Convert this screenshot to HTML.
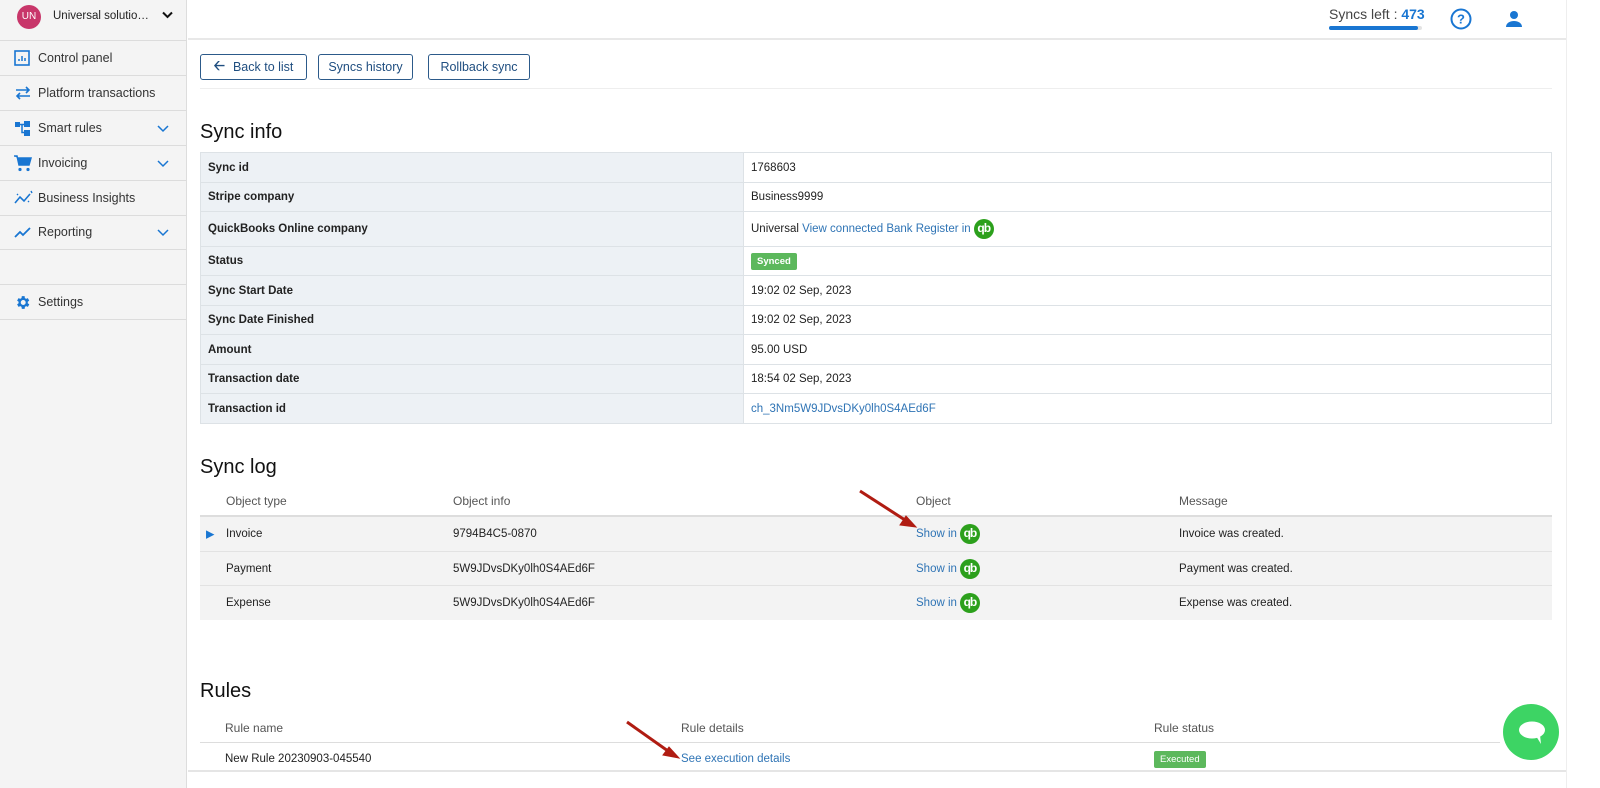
<!DOCTYPE html>
<html><head><meta charset="utf-8"><style>
*{box-sizing:border-box;margin:0;padding:0}
body{width:1600px;height:788px;overflow:hidden;background:#fff;font-family:"Liberation Sans",sans-serif;font-size:12px;color:#222;position:relative}
.abs{position:absolute}
#side{left:0;top:0;width:187px;height:788px;background:#f4f4f4;border-right:1px solid #ddd}
.it{position:absolute;left:0;width:186px;height:35px;border-bottom:1px solid #dcdcdc;font-size:12.5px;color:#333;display:flex;align-items:center;padding-left:38px}
.it svg.ic{position:absolute;left:14px;top:9px}
.chev{position:absolute;left:157px;top:14px}
#hdr{left:188px;top:0;width:1378px;height:40px;border-bottom:2px solid #e8e8e8}
.btn{position:absolute;top:54px;height:26px;border:1px solid #2c5a8a;border-radius:3px;color:#1f4e80;font-size:12.5px;display:flex;align-items:center;justify-content:center}
h2{position:absolute;font-weight:normal;font-size:20px;color:#111}
table{border-collapse:collapse}
#info{position:absolute;left:200px;top:152px;width:1352px}
#info td{border:1px solid #dde2e6;padding:0 7px;font-size:11.5px;vertical-align:middle}
#info td.l{background:#edf1f5;font-weight:bold;width:543px;color:#222}
a{color:#2f74b5;text-decoration:none}
.qb{display:inline-block;width:20px;height:20px;border-radius:50%;background:#2ca01c;color:#fff;font-weight:bold;font-size:12px;text-align:center;line-height:19px;vertical-align:middle;letter-spacing:-1px;margin-left:3px}
.row{position:absolute;left:200px;width:1352px;background:#f3f3f3;border-top:1px solid #e2e2e2;font-size:11.5px}
.row span.c{position:absolute;top:50%;transform:translateY(-50%);white-space:nowrap}
.th{position:absolute;font-size:12px;color:#555}
.badge{display:inline-block;background:#5cb85c;color:#fff;font-weight:bold;font-size:9.5px;padding:3px 6px;border-radius:2px}
</style></head><body>
<div id="side" class="abs">
 <div class="abs" style="left:0;top:0;width:186px;height:41px;border-bottom:1px solid #dcdcdc">
  <div class="abs" style="left:17px;top:5px;width:24px;height:24px;border-radius:50%;background:#c8366a;color:#fff;font-size:10px;text-align:center;line-height:24px">UN</div>
  <div class="abs" style="left:53px;top:10px;font-size:11.5px;color:#222">Universal solutio…</div>
  <svg class="abs" style="left:162px;top:11px" width="11" height="8" viewBox="0 0 11 8"><path d="M1 1.5l4.5 4.5 4.5-4.5" stroke="#111" stroke-width="2" fill="none"/></svg>
 </div>
 <div class="it" style="top:41px"><svg class="ic" width="16" height="16" viewBox="0 0 16 16"><rect x="1" y="1" width="14" height="14" fill="none" stroke="#1976d2" stroke-width="1.6"/><path d="M5 11v-2M8 11v-5M11 11v-3" stroke="#1976d2" stroke-width="1.5"/></svg>Control panel</div>
 <div class="it" style="top:76px"><svg class="ic" width="18" height="16" viewBox="0 0 18 16"><path d="M2 5h13M12 2l3 3-3 3M16 11H3M6 8l-3 3 3 3" stroke="#1976d2" stroke-width="1.6" fill="none"/></svg>Platform transactions</div>
 <div class="it" style="top:111px"><svg class="ic" width="17" height="16" viewBox="0 0 17 16"><rect x="1" y="2" width="5" height="5" fill="#1976d2"/><rect x="10" y="1" width="6" height="6" fill="#1976d2"/><rect x="10" y="10" width="6" height="6" fill="#1976d2"/><path d="M6 4.5h4M8 4.5v8h2" stroke="#1976d2" stroke-width="1.5" fill="none"/></svg>Smart rules<svg class="chev" width="12" height="8"><path d="M1 1l5 5 5-5" stroke="#1976d2" stroke-width="1.5" fill="none"/></svg></div>
 <div class="it" style="top:146px"><svg class="ic" width="18" height="17" viewBox="0 0 18 17"><path d="M0 1h3l2 9h10l2-7H4" fill="#1976d2" stroke="#1976d2" stroke-width="1.5"/><circle cx="6" cy="14.5" r="1.6" fill="#1976d2"/><circle cx="14" cy="14.5" r="1.6" fill="#1976d2"/></svg>Invoicing<svg class="chev" width="12" height="8"><path d="M1 1l5 5 5-5" stroke="#1976d2" stroke-width="1.5" fill="none"/></svg></div>
 <div class="it" style="top:181px"><svg class="ic" width="19" height="16" viewBox="0 0 19 16"><path d="M1 13l5-6 4 4 6-7" stroke="#1976d2" stroke-width="1.6" fill="none"/><path d="M3 4l1 1M14 11l1 1M17 1l1 2" stroke="#1976d2" stroke-width="1.4"/></svg>Business Insights</div>
 <div class="it" style="top:215px"><svg class="ic" width="18" height="16" viewBox="0 0 18 16"><path d="M1 13l5-5 3 3 7-7" stroke="#1976d2" stroke-width="1.8" fill="none"/></svg>Reporting<svg class="chev" width="12" height="8"><path d="M1 1l5 5 5-5" stroke="#1976d2" stroke-width="1.5" fill="none"/></svg></div>
 <div class="it" style="top:250px"></div>
 <div class="it" style="top:285px"><svg class="ic" width="17" height="17" viewBox="0 0 24 24"><path fill="#1976d2" d="M19.4 13a7.5 7.5 0 000-2l2.1-1.6-2-3.5-2.5 1a7 7 0 00-1.7-1L15 3h-4l-.4 2.9a7 7 0 00-1.7 1l-2.5-1-2 3.5L6.5 11a7.5 7.5 0 000 2l-2.1 1.6 2 3.5 2.5-1a7 7 0 001.7 1L11 21h4l.4-2.9a7 7 0 001.7-1l2.5 1 2-3.5zM13 15.5a3.5 3.5 0 110-7 3.5 3.5 0 010 7z"/></svg>Settings</div>
</div>
<div id="hdr" class="abs">
 <div class="abs" style="left:1141px;top:6px;font-size:14px;color:#444">Syncs left : <b style="color:#1976d2">473</b></div>
 <div class="abs" style="left:1141px;top:26px;width:93px;height:4px;background:#e3e3e3;border-radius:2px"><div style="width:89px;height:4px;background:#1976d2;border-radius:2px"></div></div>
 <svg class="abs" style="left:1262px;top:8px" width="22" height="22" viewBox="0 0 22 22"><circle cx="11" cy="11" r="9.5" stroke="#1976d2" stroke-width="2" fill="none"/><text x="11" y="15.5" font-size="13" font-weight="bold" fill="#1976d2" text-anchor="middle" font-family="Liberation Sans">?</text></svg>
 <svg class="abs" style="left:1316px;top:9px" width="20" height="20" viewBox="0 0 20 20"><circle cx="10" cy="6" r="4" fill="#1976d2"/><path d="M2 18c0-4 4-6 8-6s8 2 8 6z" fill="#1976d2"/></svg>
</div>
<div class="abs" style="left:1566px;top:0;width:34px;height:788px;background:#fff;border-left:1px solid #eee"></div>
<div class="btn" style="left:200px;width:107px"><span style="font-size:14px;margin-right:8px;font-weight:bold">&#129120;</span>Back to list</div>
<div class="btn" style="left:318px;width:95px">Syncs history</div>
<div class="btn" style="left:428px;width:102px">Rollback sync</div>
<div class="abs" style="left:200px;top:88px;width:1352px;height:1px;background:#eee"></div>
<h2 style="left:200px;top:121px">Sync info</h2>
<table id="info">
<tr style="height:30px"><td class="l">Sync id</td><td>1768603</td></tr>
<tr style="height:29px"><td class="l">Stripe company</td><td>Business9999</td></tr>
<tr style="height:35px"><td class="l">QuickBooks Online company</td><td>Universal <a>View connected Bank Register in</a><span class="qb">qb</span></td></tr>
<tr style="height:29px"><td class="l">Status</td><td><span class="badge">Synced</span></td></tr>
<tr style="height:30px"><td class="l">Sync Start Date</td><td>19:02 02 Sep, 2023</td></tr>
<tr style="height:29px"><td class="l">Sync Date Finished</td><td>19:02 02 Sep, 2023</td></tr>
<tr style="height:30px"><td class="l">Amount</td><td>95.00 USD</td></tr>
<tr style="height:29px"><td class="l">Transaction date</td><td>18:54 02 Sep, 2023</td></tr>
<tr style="height:30px"><td class="l">Transaction id</td><td><a>ch_3Nm5W9JDvsDKy0lh0S4AEd6F</a></td></tr>
</table>
<h2 style="left:200px;top:456px">Sync log</h2>
<div class="th" style="left:226px;top:494px">Object type</div><div class="th" style="left:453px;top:494px">Object info</div><div class="th" style="left:916px;top:494px">Object</div><div class="th" style="left:1179px;top:494px">Message</div>
<div class="row" style="top:515px;height:36px;border-top:2px solid #ddd"><span class="c" style="left:6px;color:#1976d2;font-size:11px">&#9654;</span><span class="c" style="left:26px">Invoice</span><span class="c" style="left:253px">9794B4C5-0870</span><span class="c" style="left:716px"><a>Show in</a><span class="qb">qb</span></span><span class="c" style="left:979px">Invoice was created.</span></div>
<div class="row" style="top:551px;height:34px"><span class="c" style="left:26px">Payment</span><span class="c" style="left:253px">5W9JDvsDKy0lh0S4AEd6F</span><span class="c" style="left:716px"><a>Show in</a><span class="qb">qb</span></span><span class="c" style="left:979px">Payment was created.</span></div>
<div class="row" style="top:585px;height:35px"><span class="c" style="left:26px">Expense</span><span class="c" style="left:253px">5W9JDvsDKy0lh0S4AEd6F</span><span class="c" style="left:716px"><a>Show in</a><span class="qb">qb</span></span><span class="c" style="left:979px">Expense was created.</span></div>
<h2 style="left:200px;top:680px">Rules</h2>
<div class="th" style="left:225px;top:721px">Rule name</div><div class="th" style="left:681px;top:721px">Rule details</div><div class="th" style="left:1154px;top:721px">Rule status</div>
<div class="abs" style="left:200px;top:742px;width:1300px;height:1px;background:#ddd"></div>
<div class="abs" style="left:225px;top:753px;font-size:11.5px">New Rule 20230903-045540</div>
<div class="abs" style="left:681px;top:753px;font-size:11.5px"><a>See execution details</a></div>
<div class="abs" style="left:1154px;top:751px"><span class="badge" style="font-weight:normal">Executed</span></div>
<div class="abs" style="left:188px;top:770px;width:1378px;height:2px;background:#e5e5e5"></div>
<svg class="abs" style="left:0;top:0" width="1600" height="788"><g fill="#b01c12" stroke="#b01c12"><path d="M860 491L905 520" stroke-width="3"/><path d="M916 527l-16-2 6-9z"/><path d="M627 722L668 751" stroke-width="3"/><path d="M679 758l-16-3 6-8z"/></g></svg>
<div class="abs" style="left:1503px;top:704px;width:56px;height:56px;border-radius:50%;background:#3dd464"></div>
<svg class="abs" style="left:1510px;top:716px" width="44" height="34" viewBox="0 0 44 34"><ellipse cx="22" cy="14" rx="13" ry="8.5" fill="#fff"/><path d="M26 20l5 8-1-9z" fill="#fff"/></svg>
</body></html>
